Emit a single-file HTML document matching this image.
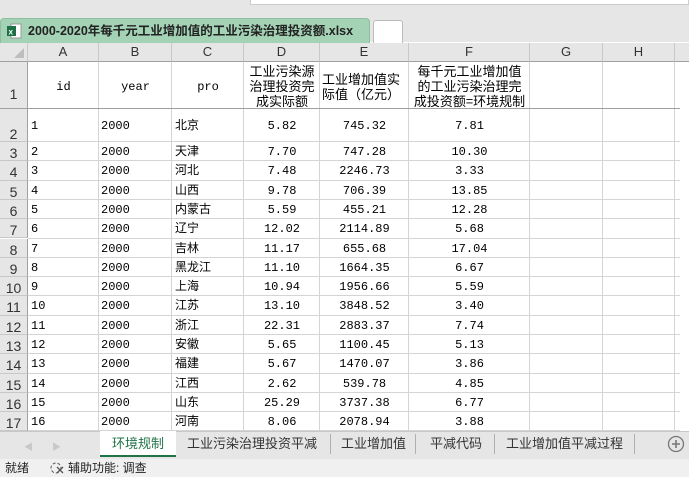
<!DOCTYPE html>
<html><head><meta charset="utf-8"><style>
*{margin:0;padding:0;box-sizing:border-box}
body{width:689px;height:477px;overflow:hidden;background:#fff;font-family:"Liberation Mono","Noto Sans CJK SC",monospace;font-size:12px;color:#000;position:relative}
.a{position:absolute}
.top{left:0;top:0;width:689px;height:42px;background:#e6e6e6}
.ftab{left:0;top:18px;width:370px;height:25px;background:#a4d2b5;border:1px solid #8cbf9f;border-bottom:none;border-radius:4px 4px 0 0;font-family:"Liberation Sans","Noto Sans CJK SC",sans-serif;font-weight:bold;font-size:12.5px;line-height:24px;padding-left:27px;color:#222}
.ntab{left:373px;top:20px;width:30px;height:23px;background:#fff;border:1px solid #bbb;border-bottom:none;border-radius:3px 3px 0 0}
.srch{left:250px;top:0;width:439px;height:5px;background:#fff;border:1px solid #ccc;border-top:none}
.ch{top:43px;height:19px;background:#e6e6e6;border-right:1px solid #c8c8c8;border-bottom:1px solid #a0a0a0;text-align:center;font-family:"Liberation Sans",sans-serif;font-size:13px;line-height:18px;color:#333}
.rh{left:0;width:28px;background:#e6e6e6;border-right:1px solid #a0a0a0;border-bottom:1px solid #c8c8c8;font-family:"Liberation Sans",sans-serif;font-size:14px;text-align:center;color:#333}
.hl{left:28px;width:652px;height:1px;background:#d4d4d4}
.vl{top:62px;width:1px;height:369px;background:#d4d4d4}
.c{height:19px;line-height:20px;white-space:nowrap}
.hd{font-family:"Noto Sans CJK SC",sans-serif;font-size:13px;line-height:15px;text-align:center;white-space:nowrap}
.tabs{left:0;top:431px;width:689px;height:28px;background:#e6e6e6;border-top:1px solid #c8c8c8}
.st{font-family:"Liberation Sans","Noto Sans CJK SC",sans-serif;font-size:13px;top:434px;height:22px;line-height:20px;color:#333}
.sep{top:434px;width:1px;height:20px;background:#b0b0b0}
.status{left:0;top:459px;width:689px;height:18px;background:#f0f0f0;font-family:"Liberation Sans","Noto Sans CJK SC",sans-serif;font-size:12px;line-height:18px;color:#222}
</style></head><body>
<div class="a top"></div>
<div class="a srch"></div>
<div class="a ftab">2000-2020年每千元工业增加值的工业污染治理投资额.xlsx <span style="color:#8aa;font-weight:normal;margin-left:8px">✕</span></div>
<svg class="a" style="left:6px;top:23px" width="16" height="16"><rect x="5" y="1" width="10" height="14" fill="#fff" stroke="#999"/><rect x="1" y="3" width="9" height="10" fill="#1e7145"/><text x="2.5" y="11.5" font-size="8" fill="#fff" font-family="Liberation Sans" font-weight="bold">x</text></svg>
<div class="a ntab"></div>

<div class="a" style="left:0;top:43px;width:28px;height:19px;background:#e6e6e6;border-right:1px solid #c8c8c8;border-bottom:1px solid #a0a0a0"></div>
<svg class="a" style="left:14px;top:48px" width="10" height="10"><polygon points="10,0 10,10 0,10" fill="#bdbdbd"/></svg>
<div class="a ch" style="left:28px;width:71px">A</div>
<div class="a ch" style="left:99px;width:73px">B</div>
<div class="a ch" style="left:172px;width:72px">C</div>
<div class="a ch" style="left:244px;width:76px">D</div>
<div class="a ch" style="left:320px;width:89px">E</div>
<div class="a ch" style="left:409px;width:121px">F</div>
<div class="a ch" style="left:530px;width:73px">G</div>
<div class="a ch" style="left:603px;width:72px">H</div>
<div class="a ch" style="left:675px;width:14px;border-right:none"></div>

<div class="a rh" style="top:62px;height:47px;line-height:64px;border-bottom-color:#a0a0a0">1</div>
<div class="a rh" style="top:109px;height:33px;line-height:50px">2</div>
<div class="a rh" style="top:142px;height:19.3px;line-height:22px">3</div>
<div class="a rh" style="top:161.3px;height:19.3px;line-height:22px">4</div>
<div class="a rh" style="top:180.6px;height:19.3px;line-height:22px">5</div>
<div class="a rh" style="top:199.9px;height:19.3px;line-height:22px">6</div>
<div class="a rh" style="top:219.2px;height:19.3px;line-height:22px">7</div>
<div class="a rh" style="top:238.5px;height:19.3px;line-height:22px">8</div>
<div class="a rh" style="top:257.8px;height:19.3px;line-height:22px">9</div>
<div class="a rh" style="top:277.1px;height:19.3px;line-height:22px">10</div>
<div class="a rh" style="top:296.4px;height:19.3px;line-height:22px">11</div>
<div class="a rh" style="top:315.7px;height:19.3px;line-height:22px">12</div>
<div class="a rh" style="top:335px;height:19.3px;line-height:22px">13</div>
<div class="a rh" style="top:354.3px;height:19.3px;line-height:22px">14</div>
<div class="a rh" style="top:373.6px;height:19.3px;line-height:22px">15</div>
<div class="a rh" style="top:392.9px;height:19.3px;line-height:22px">16</div>
<div class="a rh" style="top:412.2px;height:19px;line-height:22px">17</div>

<div class="a vl" style="left:98px"></div><div class="a vl" style="left:171px"></div><div class="a vl" style="left:243px"></div><div class="a vl" style="left:319px"></div><div class="a vl" style="left:408px"></div><div class="a vl" style="left:529px"></div><div class="a vl" style="left:602px"></div><div class="a vl" style="left:674px"></div>
<div class="a hl" style="top:108px;background:#a0a0a0"></div>
<div class="a hl" style="top:141px"></div><div class="a hl" style="top:160.3px"></div><div class="a hl" style="top:179.6px"></div><div class="a hl" style="top:198.9px"></div><div class="a hl" style="top:218.2px"></div><div class="a hl" style="top:237.5px"></div><div class="a hl" style="top:256.8px"></div><div class="a hl" style="top:276.1px"></div><div class="a hl" style="top:295.4px"></div><div class="a hl" style="top:314.7px"></div><div class="a hl" style="top:334px"></div><div class="a hl" style="top:353.3px"></div><div class="a hl" style="top:372.6px"></div><div class="a hl" style="top:391.9px"></div><div class="a hl" style="top:411.2px"></div><div class="a hl" style="top:430px"></div>

<div class="a c" style="left:28px;width:71px;top:77px;text-align:center">id</div>
<div class="a c" style="left:99px;width:73px;top:77px;text-align:center">year</div>
<div class="a c" style="left:172px;width:72px;top:77px;text-align:center">pro</div>
<div class="a hd" style="left:244px;width:76px;top:63px">工业污染源<br>治理投资完<br>成实际额</div>
<div class="a hd" style="left:322px;width:87px;top:71px;text-align:left">工业增加值实<br>际值（亿元）</div>
<div class="a hd" style="left:409px;width:121px;top:63px">每千元工业增加值<br>的工业污染治理完<br>成投资额=环境规制</div>

<div class="a" style="left:0;top:116px;width:689px">
<div class="a c" style="left:31px;top:0">1</div><div class="a c" style="left:101px;top:0">2000</div><div class="a c" style="left:175px;top:0">北京</div><div class="a c" style="left:244px;width:76px;text-align:center;top:0">5.82</div><div class="a c" style="left:320px;width:89px;text-align:center;top:0">745.32</div><div class="a c" style="left:409px;width:121px;text-align:center;top:0">7.81</div>
</div>
<div class="a" style="left:0;top:142px;width:689px">
<div class="a c" style="left:31px;top:0px">2</div><div class="a c" style="left:101px;top:0px">2000</div><div class="a c" style="left:175px;top:0px">天津</div><div class="a c" style="left:244px;width:76px;text-align:center;top:0px">7.70</div><div class="a c" style="left:320px;width:89px;text-align:center;top:0px">747.28</div><div class="a c" style="left:409px;width:121px;text-align:center;top:0px">10.30</div>
<div class="a c" style="left:31px;top:19.3px">3</div><div class="a c" style="left:101px;top:19.3px">2000</div><div class="a c" style="left:175px;top:19.3px">河北</div><div class="a c" style="left:244px;width:76px;text-align:center;top:19.3px">7.48</div><div class="a c" style="left:320px;width:89px;text-align:center;top:19.3px">2246.73</div><div class="a c" style="left:409px;width:121px;text-align:center;top:19.3px">3.33</div>
<div class="a c" style="left:31px;top:38.6px">4</div><div class="a c" style="left:101px;top:38.6px">2000</div><div class="a c" style="left:175px;top:38.6px">山西</div><div class="a c" style="left:244px;width:76px;text-align:center;top:38.6px">9.78</div><div class="a c" style="left:320px;width:89px;text-align:center;top:38.6px">706.39</div><div class="a c" style="left:409px;width:121px;text-align:center;top:38.6px">13.85</div>
<div class="a c" style="left:31px;top:57.9px">5</div><div class="a c" style="left:101px;top:57.9px">2000</div><div class="a c" style="left:175px;top:57.9px">内蒙古</div><div class="a c" style="left:244px;width:76px;text-align:center;top:57.9px">5.59</div><div class="a c" style="left:320px;width:89px;text-align:center;top:57.9px">455.21</div><div class="a c" style="left:409px;width:121px;text-align:center;top:57.9px">12.28</div>
<div class="a c" style="left:31px;top:77.2px">6</div><div class="a c" style="left:101px;top:77.2px">2000</div><div class="a c" style="left:175px;top:77.2px">辽宁</div><div class="a c" style="left:244px;width:76px;text-align:center;top:77.2px">12.02</div><div class="a c" style="left:320px;width:89px;text-align:center;top:77.2px">2114.89</div><div class="a c" style="left:409px;width:121px;text-align:center;top:77.2px">5.68</div>
<div class="a c" style="left:31px;top:96.5px">7</div><div class="a c" style="left:101px;top:96.5px">2000</div><div class="a c" style="left:175px;top:96.5px">吉林</div><div class="a c" style="left:244px;width:76px;text-align:center;top:96.5px">11.17</div><div class="a c" style="left:320px;width:89px;text-align:center;top:96.5px">655.68</div><div class="a c" style="left:409px;width:121px;text-align:center;top:96.5px">17.04</div>
<div class="a c" style="left:31px;top:115.8px">8</div><div class="a c" style="left:101px;top:115.8px">2000</div><div class="a c" style="left:175px;top:115.8px">黑龙江</div><div class="a c" style="left:244px;width:76px;text-align:center;top:115.8px">11.10</div><div class="a c" style="left:320px;width:89px;text-align:center;top:115.8px">1664.35</div><div class="a c" style="left:409px;width:121px;text-align:center;top:115.8px">6.67</div>
<div class="a c" style="left:31px;top:135.1px">9</div><div class="a c" style="left:101px;top:135.1px">2000</div><div class="a c" style="left:175px;top:135.1px">上海</div><div class="a c" style="left:244px;width:76px;text-align:center;top:135.1px">10.94</div><div class="a c" style="left:320px;width:89px;text-align:center;top:135.1px">1956.66</div><div class="a c" style="left:409px;width:121px;text-align:center;top:135.1px">5.59</div>
<div class="a c" style="left:31px;top:154.4px">10</div><div class="a c" style="left:101px;top:154.4px">2000</div><div class="a c" style="left:175px;top:154.4px">江苏</div><div class="a c" style="left:244px;width:76px;text-align:center;top:154.4px">13.10</div><div class="a c" style="left:320px;width:89px;text-align:center;top:154.4px">3848.52</div><div class="a c" style="left:409px;width:121px;text-align:center;top:154.4px">3.40</div>
<div class="a c" style="left:31px;top:173.7px">11</div><div class="a c" style="left:101px;top:173.7px">2000</div><div class="a c" style="left:175px;top:173.7px">浙江</div><div class="a c" style="left:244px;width:76px;text-align:center;top:173.7px">22.31</div><div class="a c" style="left:320px;width:89px;text-align:center;top:173.7px">2883.37</div><div class="a c" style="left:409px;width:121px;text-align:center;top:173.7px">7.74</div>
<div class="a c" style="left:31px;top:193px">12</div><div class="a c" style="left:101px;top:193px">2000</div><div class="a c" style="left:175px;top:193px">安徽</div><div class="a c" style="left:244px;width:76px;text-align:center;top:193px">5.65</div><div class="a c" style="left:320px;width:89px;text-align:center;top:193px">1100.45</div><div class="a c" style="left:409px;width:121px;text-align:center;top:193px">5.13</div>
<div class="a c" style="left:31px;top:212.3px">13</div><div class="a c" style="left:101px;top:212.3px">2000</div><div class="a c" style="left:175px;top:212.3px">福建</div><div class="a c" style="left:244px;width:76px;text-align:center;top:212.3px">5.67</div><div class="a c" style="left:320px;width:89px;text-align:center;top:212.3px">1470.07</div><div class="a c" style="left:409px;width:121px;text-align:center;top:212.3px">3.86</div>
<div class="a c" style="left:31px;top:231.6px">14</div><div class="a c" style="left:101px;top:231.6px">2000</div><div class="a c" style="left:175px;top:231.6px">江西</div><div class="a c" style="left:244px;width:76px;text-align:center;top:231.6px">2.62</div><div class="a c" style="left:320px;width:89px;text-align:center;top:231.6px">539.78</div><div class="a c" style="left:409px;width:121px;text-align:center;top:231.6px">4.85</div>
<div class="a c" style="left:31px;top:250.9px">15</div><div class="a c" style="left:101px;top:250.9px">2000</div><div class="a c" style="left:175px;top:250.9px">山东</div><div class="a c" style="left:244px;width:76px;text-align:center;top:250.9px">25.29</div><div class="a c" style="left:320px;width:89px;text-align:center;top:250.9px">3737.38</div><div class="a c" style="left:409px;width:121px;text-align:center;top:250.9px">6.77</div>
<div class="a c" style="left:31px;top:270.2px">16</div><div class="a c" style="left:101px;top:270.2px">2000</div><div class="a c" style="left:175px;top:270.2px">河南</div><div class="a c" style="left:244px;width:76px;text-align:center;top:270.2px">8.06</div><div class="a c" style="left:320px;width:89px;text-align:center;top:270.2px">2078.94</div><div class="a c" style="left:409px;width:121px;text-align:center;top:270.2px">3.88</div>
</div>

<div class="a tabs"></div>
<div class="a" style="left:24px;top:440px;color:#c8c8c8;font-size:9px">◀</div>
<div class="a" style="left:52px;top:440px;color:#c8c8c8;font-size:9px">▶</div>
<div class="a" style="left:100px;top:431px;width:76px;height:26px;background:#fff;border-bottom:2px solid #217346"></div>
<div class="a st" style="left:100px;width:76px;text-align:center;color:#217346">环境规制</div>
<div class="a st" style="left:187px">工业污染治理投资平减</div>
<div class="a sep" style="left:330px"></div>
<div class="a st" style="left:341px">工业增加值</div>
<div class="a sep" style="left:415px"></div>
<div class="a st" style="left:430px">平减代码</div>
<div class="a sep" style="left:494px"></div>
<div class="a st" style="left:506px">工业增加值平减过程</div>
<div class="a sep" style="left:634px"></div>
<svg class="a" style="left:667px;top:435px" width="18" height="18"><circle cx="9" cy="9" r="7.5" fill="none" stroke="#777" stroke-width="1.3"/><path d="M9 5v8M5 9h8" stroke="#777" stroke-width="1.6"/></svg>

<div class="a status"><span style="position:absolute;left:5px">就绪</span>
<svg style="position:absolute;left:50px;top:2px" width="14" height="14"><circle cx="6" cy="7" r="5" fill="none" stroke="#555" stroke-dasharray="3 2"/><path d="M7 6l6 6M13 6l-6 6" stroke="#555" stroke-width="1.3"/></svg>
<span style="position:absolute;left:68px">辅助功能: 调查</span></div>
</body></html>
